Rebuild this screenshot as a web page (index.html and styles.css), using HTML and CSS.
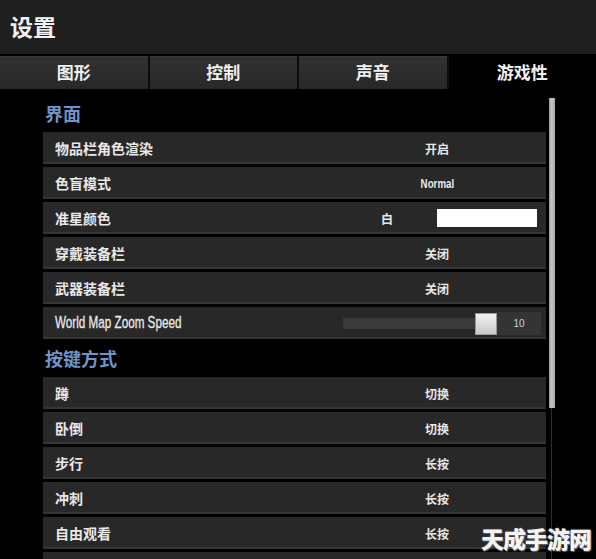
FILE: index.html
```html
<!DOCTYPE html>
<html>
<head>
    <meta charset="utf-8">
    <title>设置</title>
    <link rel="stylesheet" href="styles.css">
</head>
<body>

<div class="header">设置</div>

<div class="tabs">
    <div class="tab">图形</div>
    <div class="tab">控制</div>
    <div class="tab">声音</div>
    <div class="tab active">游戏性</div>
</div>

<div class="content">
    <div class="list">
        <div class="group-title">界面</div>
        <div class="row"><span class="label">物品栏角色渲染</span><span class="value">开启</span></div>
        <div class="row"><span class="label">色盲模式</span><span class="value"><span class="narrow">Normal</span></span></div>
        <div class="row">
            <span class="label">准星颜色</span>
            <span class="value split"><span class="half">白</span><span class="swatch"></span></span>
        </div>
        <div class="row"><span class="label">穿戴装备栏</span><span class="value">关闭</span></div>
        <div class="row"><span class="label">武器装备栏</span><span class="value">关闭</span></div>
        <div class="row">
            <span class="label"><span class="narrow big">World Map Zoom Speed</span></span>
            <span class="value slider">
                <span class="track"><span class="thumb"></span></span>
                <span class="num">10</span>
            </span>
        </div>

        <div class="group-title">按键方式</div>
        <div class="row"><span class="label">蹲</span><span class="value">切换</span></div>
        <div class="row"><span class="label">卧倒</span><span class="value">切换</span></div>
        <div class="row"><span class="label">步行</span><span class="value">长按</span></div>
        <div class="row"><span class="label">冲刺</span><span class="value">长按</span></div>
        <div class="row"><span class="label">自由观看</span><span class="value">长按</span></div>
        <div class="row"></div>
    </div>
    <div class="scrollbar"><div class="scroll-thumb"></div></div>
</div>

<div class="watermark">天成手游网</div>

</body>
</html>
```

FILE: styles.css
```css
html, body {
    height: 559px;
    overflow: hidden;
}

body {
    margin: 0;
    background-color: #000;
    color: #e8e8e8;
    font-family: 'Liberation Sans', 'Noto Sans CJK SC', sans-serif;
    font-weight: bold;
    position: relative;
}

.header {
    height: 54px;
    background-color: #1f1f1f;
    font-size: 23px;
    line-height: 56px;
    padding-left: 10px;
    color: #f2f2f2;
}

.tabs {
    display: grid;
    grid-template-columns: repeat(4, 1fr);
    gap: 2px;
    margin-top: 2px;
    background-color: #0c0c0c;
}

.tab {
    height: 32px;
    line-height: 34px;
    text-align: center;
    font-size: 17px;
    color: #f0f0f0;
    background: linear-gradient(#313131, #282828);
    border-top: 1px solid #3a3a3a;
}

.tab.active {
    background: #000;
    border-top-color: #000;
}

.content {
    display: flex;
    padding-top: 8px;
}

.list {
    width: 503px;
    margin-left: 43px;
}

.group-title {
    height: 32px;
    line-height: 36px;
    margin-bottom: 3px;
    padding-left: 2px;
    font-size: 18px;
    color: #6f94c9;
}

.row {
    display: grid;
    grid-template-columns: 1fr 200px;
    align-items: center;
    height: 32px;
    margin-bottom: 3px;
    padding: 0 9px 0 12px;
    background-color: #282828;
    box-shadow: inset 0 -2px 0 #353535;
}

.label {
    font-size: 14px;
}

/* the game font is condensed; squeeze a sans to match */
.narrow {
    display: inline-block;
    font-size: 13px;
    transform: scaleX(0.75);
}

.narrow.big {
    font-size: 16px;
    font-weight: normal;
    transform: scaleX(0.73);
    transform-origin: left center;
    -webkit-text-stroke: 0.3px #e8e8e8;
}

.value {
    text-align: center;
    font-size: 12px;
}

.split {
    display: flex;
    align-items: center;
}

.half {
    width: 100px;
}

.swatch {
    width: 100px;
    height: 18px;
    background-color: #fff;
}

.slider {
    display: flex;
    align-items: center;
    margin: 0 -4px 0 6px;
}

.track {
    flex: 1;
    height: 11px;
    background-color: #3a3a3a;
    position: relative;
}

.thumb {
    position: absolute;
    right: -19px;
    top: -5px;
    width: 20px;
    height: 20px;
    background: linear-gradient(#f2f2f2, #c8c8c8);
    border: 1px solid #999;
}

.num {
    width: 44px;
    height: 23px;
    line-height: 23px;
    margin-left: 19px;
    background-color: #343434;
    font-size: 10px;
    font-weight: normal;
    color: #cfcfcf;
}

.scrollbar {
    width: 6px;
    margin-left: 3px;
    margin-top: 1px;
    height: 470px;
    background: linear-gradient(to right, transparent 2px, #2e2e2e 2px, #2e2e2e 3px, transparent 3px);
}

.scroll-thumb {
    height: 310px;
    background: linear-gradient(to right, #9a9a9a, #c4c4c4 40%, #aaaaaa);
}

.watermark {
    position: absolute;
    right: 5px;
    bottom: 4px;
    font-size: 23px;
    font-family: 'Noto Sans CJK SC', sans-serif;
    font-weight: 900;
    color: #f4f4f4;
    letter-spacing: -1px;
    text-shadow: 0 0 2px #555, 1px 1px 1px #666;
}
```
